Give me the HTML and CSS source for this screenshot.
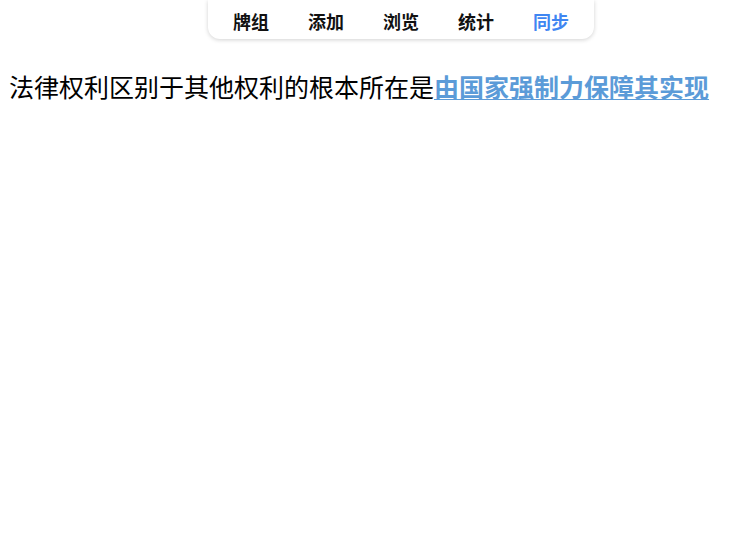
FILE: index.html
```html
<!DOCTYPE html>
<html lang="zh">
<head>
<meta charset="utf-8">
<link rel="stylesheet" href="styles.css">
</head>
<body>
<nav class="nav">
  <a class="nav-item">牌组</a>
  <a class="nav-item">添加</a>
  <a class="nav-item">浏览</a>
  <a class="nav-item">统计</a>
  <a class="nav-item active">同步</a>
</nav>
<p class="text">法律权利区别于其他权利的根本所在是<a class="answer">由国家强制力保障其实现</a></p>
</body>
</html>
```
FILE: styles.css
```css
html, body {
  margin: 0;
  padding: 0;
  background: #fff;
}
body {
  font-family: "Noto Sans CJK SC", "Liberation Sans", sans-serif;
  color: #000;
}
.nav {
  width: 386px;
  height: 39px;
  margin: 0 0 0 208px;
  box-sizing: border-box;
  display: flex;
  justify-content: center;
  align-items: center;
  gap: 39px;
  background: #fff;
  border-radius: 0 0 12px 12px;
  box-shadow: 0 1px 4px rgba(0, 0, 0, 0.18);
  padding-top: 2px;
}
.nav-item {
  font-size: 18px;
  font-weight: 700;
  color: #111;
  line-height: 1;
}
.nav-item.active {
  color: #3f86f2;
}
.text {
  margin: 32px 0 0 9px;
  font-size: 25px;
  line-height: 30px;
  white-space: nowrap;
}
.answer {
  font-weight: 700;
  color: #5b9bd8;
  text-decoration: underline;
  text-decoration-thickness: 1px;
  text-underline-offset: 2px;
}
```
